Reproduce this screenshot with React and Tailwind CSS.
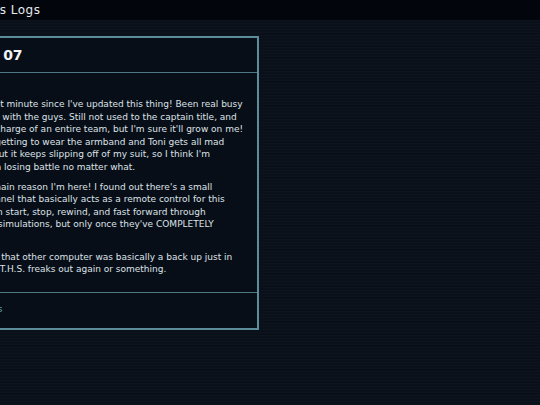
import React from "react";

const font = { fontFamily: '"DejaVu Sans", "Liberation Sans", sans-serif' };

export default function App() {
  return (
    <div className="w-[540px] h-[405px] overflow-hidden bg-[#09101a]" style={font}>
      <div className="-ml-[95px] w-[635px] h-full flex flex-col">

        {/* TOP BAR */}
        <header className="h-[20px] shrink-0 bg-[#03050c] flex items-center pl-[41px]">
          <span className="text-[12px] text-[#e8eaee] tracking-[0.5px]">Captain's Logs</span>
        </header>

        {/* MAIN */}
        <main className="flex-1 bg-[#09101a] bg-[repeating-linear-gradient(0deg,rgba(255,255,255,0.015)_0px,rgba(255,255,255,0.015)_1px,transparent_1px,transparent_3px)] pt-[16px] pl-[16px]">

          <article className="w-[338px] border-2 border-[#5b8c99] bg-[#080e17]">

            {/* Title */}
            <div className="h-[35px] flex items-center pl-[33px] border-b border-[#4d7884]">
              <h1 className="text-[14px] font-bold text-[#f2f4f6] whitespace-nowrap">Entry 07</h1>
            </div>

            {/* Entry */}
            <div className="pt-[25px] pb-[16px] pl-[16px] pr-[12px] text-[9px] leading-[12.6px] text-[#dde2e8] whitespace-nowrap">
              <p className="mb-[7px]">
                It's been a hot minute since I've updated this thing! Been real busy<br />
                sparring hard with the guys. Still not used to the captain title, and<br />
                me being in charge of an entire team, but I'm sure it'll grow on me!<br />
                I keep on forgetting to wear the armband and Toni gets all mad<br />
                about it all, but it keeps slipping off of my suit, so I think I'm<br />
                just fighting a losing battle no matter what.
              </p>
              <p className="mb-[7px]">
                Alright, the main reason I'm here! I found out there's a small<br />
                old control panel that basically acts as a remote control for this<br />
                thing, so I can start, stop, rewind, and fast forward through<br />
                all of the old simulations, but only once they've COMPLETELY<br />
                finished.
              </p>
              <p>
                Oh, turns out that other computer was basically a back up just in<br />
                case the M.A.T.H.S. freaks out again or something.
              </p>
            </div>

            {/* Footer */}
            <div className="h-[36px] flex items-center pl-[16px] border-t border-[#4d7884]">
              <a className="text-[9px] text-[#5fa3b3] whitespace-nowrap">« Back to logs</a>
            </div>

          </article>
        </main>
      </div>
    </div>
  );
}
